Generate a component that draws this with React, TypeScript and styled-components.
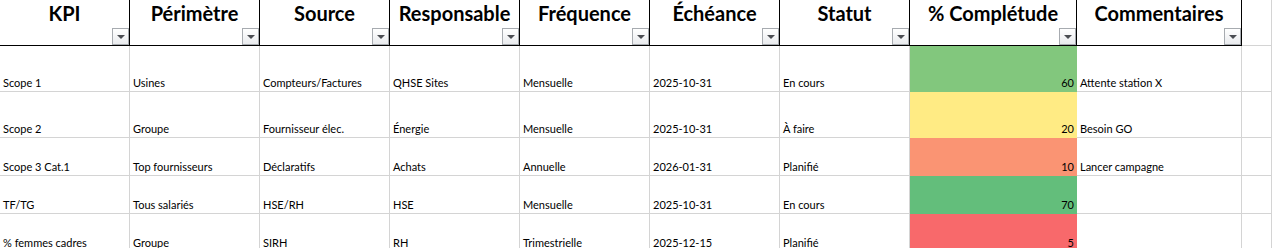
import React from "react";
import styled, { createGlobalStyle } from "styled-components";

const GlobalStyle = createGlobalStyle`
    html, body {
        margin: 0;
        padding: 0;
        background: #ffffff;
        overflow: hidden;
    }
    * {
        box-sizing: border-box;
    }
`;

const StyledSheet = styled.div`
    display: grid;
    grid-template-columns: repeat(7, 130px) 167px 165px 1fr;
    grid-template-rows: 46px 46px 46px 38px 38px 38px;
    width: 1272px;
    height: 248px;
    overflow: hidden;
    font-family: Lato, "Open Sans", sans-serif;
    color: #000000;
`;

const StyledHeaderCell = styled.div`
    display: flex;
    flex-direction: column;
    justify-content: space-between;
    border-right: 1px solid #000000;
    border-bottom: 1px solid #000000;
    background: #ffffff;
`;

const StyledHeaderTitle = styled.div`
    padding-top: 1px;
    font-size: 20px;
    line-height: 24px;
    font-weight: 700;
    text-align: center;
    white-space: nowrap;
`;

const StyledFilterButton = styled.div`
    align-self: flex-end;
    display: flex;
    align-items: center;
    justify-content: center;
    width: 17px;
    height: 17px;
    border: 1px solid #a7abb0;
    background: linear-gradient(#ffffff, #e9ebee);

    &::after {
        content: "";
        width: 0;
        height: 0;
        margin-top: 1px;
        border-left: 4px solid transparent;
        border-right: 4px solid transparent;
        border-top: 4px solid #4a4d52;
    }
`;

const StyledGapCell = styled.div<{ $line: string }>`
    border-right: 1px solid #d4d4d4;
    border-bottom: 1px solid ${(p) => p.$line};
`;

const StyledCell = styled.div<{ $fill?: string; $right?: boolean }>`
    display: flex;
    align-items: flex-end;
    justify-content: ${(p) => (p.$right ? "flex-end" : "flex-start")};
    padding: 0 ${(p) => (p.$right ? "2px" : "2px")} 1px 3px;
    font-size: 11px;
    line-height: 14px;
    white-space: nowrap;
    overflow: visible;
    background: ${(p) => p.$fill || "#ffffff"};
    border-right: 1px solid ${(p) => p.$fill || "#d4d4d4"};
    border-bottom: 1px solid ${(p) => p.$fill || "#d4d4d4"};
`;

const columns = ["KPI", "Périmètre", "Source", "Responsable", "Fréquence", "Échéance", "Statut", "% Complétude", "Commentaires"];

type Row = {
    kpi: string;
    perimetre: string;
    source: string;
    responsable: string;
    frequence: string;
    echeance: string;
    statut: string;
    completude: number;
    fill: string;
    commentaire: string;
};

const rows: Row[] = [
    { kpi: "Scope 1", perimetre: "Usines", source: "Compteurs/Factures", responsable: "QHSE Sites", frequence: "Mensuelle", echeance: "2025-10-31", statut: "En cours", completude: 60, fill: "#82c77d", commentaire: "Attente station X" },
    { kpi: "Scope 2", perimetre: "Groupe", source: "Fournisseur élec.", responsable: "Énergie", frequence: "Mensuelle", echeance: "2025-10-31", statut: "À faire", completude: 20, fill: "#ffeb84", commentaire: "Besoin GO" },
    { kpi: "Scope 3 Cat.1", perimetre: "Top fournisseurs", source: "Déclaratifs", responsable: "Achats", frequence: "Annuelle", echeance: "2026-01-31", statut: "Planifié", completude: 10, fill: "#fa9473", commentaire: "Lancer campagne" },
    { kpi: "TF/TG", perimetre: "Tous salariés", source: "HSE/RH", responsable: "HSE", frequence: "Mensuelle", echeance: "2025-10-31", statut: "En cours", completude: 70, fill: "#63be7b", commentaire: "" },
    { kpi: "% femmes cadres", perimetre: "Groupe", source: "SIRH", responsable: "RH", frequence: "Trimestrielle", echeance: "2025-12-15", statut: "Planifié", completude: 5, fill: "#f8696b", commentaire: "" },
];

const App = () => {
    return (
        <>
            <GlobalStyle />
            <StyledSheet>
                {columns.map((title) => (
                    <StyledHeaderCell key={title}>
                        <StyledHeaderTitle>{title}</StyledHeaderTitle>
                        <StyledFilterButton />
                    </StyledHeaderCell>
                ))}
                <StyledGapCell $line="#d4d4d4" />

                {rows.map((row) => (
                    <React.Fragment key={row.kpi}>
                        <StyledCell>{row.kpi}</StyledCell>
                        <StyledCell>{row.perimetre}</StyledCell>
                        <StyledCell>{row.source}</StyledCell>
                        <StyledCell>{row.responsable}</StyledCell>
                        <StyledCell>{row.frequence}</StyledCell>
                        <StyledCell>{row.echeance}</StyledCell>
                        <StyledCell>{row.statut}</StyledCell>
                        <StyledCell $fill={row.fill} $right>
                            {row.completude}
                        </StyledCell>
                        <StyledCell>{row.commentaire}</StyledCell>
                        <StyledGapCell $line="#d4d4d4" />
                    </React.Fragment>
                ))}
            </StyledSheet>
        </>
    );
};

export default App;
